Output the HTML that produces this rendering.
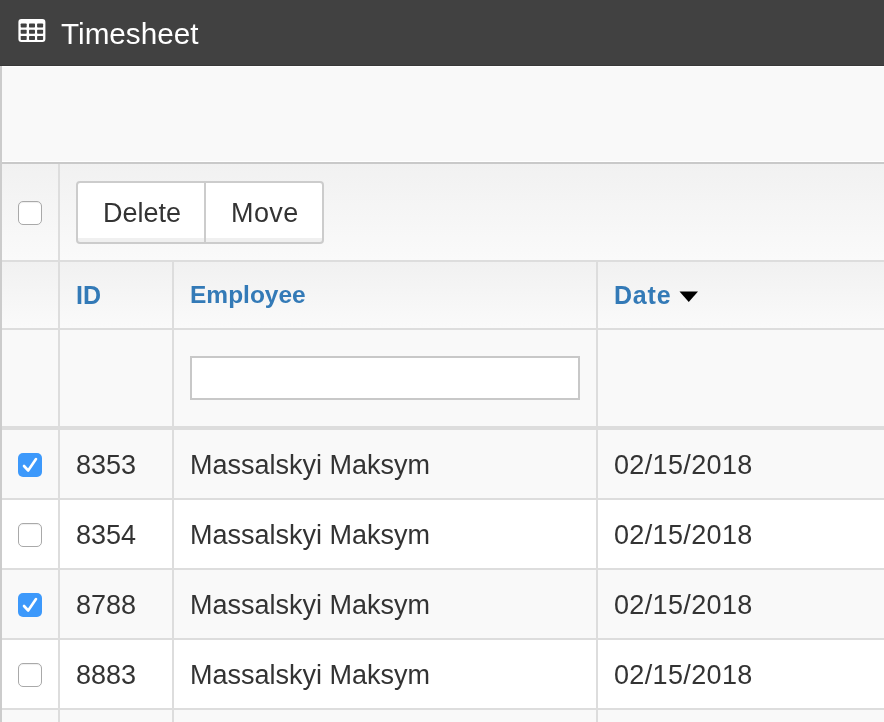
<!DOCTYPE html>
<html><head><meta charset="utf-8">
<style>
html,body{margin:0;padding:0;}
body{width:884px;height:722px;overflow:hidden;position:relative;background:#fff;font-family:"Liberation Sans",sans-serif;color:#333;}
div,span{position:absolute;box-sizing:border-box;}
.hdr{left:0;top:0;width:884px;height:66px;background:#414141;border-bottom:1px solid #383838;}
.title{left:61px;top:15.5px;font-size:29.7px;line-height:36px;color:#fff;white-space:nowrap;}
.lb{left:0;top:66px;width:2px;height:656px;background:#cccccc;}
.panel{left:2px;top:66px;width:882px;height:96px;background:#f9f9f9;border-top:1px solid #fff;border-bottom:1px solid #fff;}
.hline{left:2px;width:882px;}
.vline{width:2px;background:#dddddd;}
.grad{background:linear-gradient(to bottom,#f1f1f1,#fafafa);}
.txt,.th,.title{will-change:transform;}
.txt{font-size:27px;line-height:32px;white-space:nowrap;color:#333;}
.th{font-size:25px;line-height:32px;font-weight:bold;color:#337ab7;white-space:nowrap;}
.cb{width:24px;height:24px;border:1px solid #a9a9a9;border-radius:5px;background:#fff;box-shadow:inset 0 1px 1px rgba(0,0,0,0.07);}
.cbc{width:24px;height:24px;border-radius:5px;background:#3d99fb;}
.btn{top:181px;height:63px;border:2px solid #cccccc;background:linear-gradient(to bottom,#fff 0,#fff 55px,#f0f0f0 55px,#f0f0f0 100%);}
</style></head><body>
<div class="hdr"></div>
<svg style="position:absolute;left:18px;top:19px" width="28" height="24" viewBox="0 0 28 24"><rect x="0.4" y="0.1" width="27" height="22.9" rx="3" fill="#fff"/><rect x="2.7" y="4.5" width="6" height="4" rx="0.7" fill="#414141"/><rect x="2.7" y="10.7" width="6" height="4" rx="0.7" fill="#414141"/><rect x="2.7" y="16.9" width="6" height="4" rx="0.7" fill="#414141"/><rect x="11" y="4.5" width="6" height="4" rx="0.7" fill="#414141"/><rect x="11" y="10.7" width="6" height="4" rx="0.7" fill="#414141"/><rect x="11" y="16.9" width="6" height="4" rx="0.7" fill="#414141"/><rect x="19.1" y="4.5" width="6" height="4" rx="0.7" fill="#414141"/><rect x="19.1" y="10.7" width="6" height="4" rx="0.7" fill="#414141"/><rect x="19.1" y="16.9" width="6" height="4" rx="0.7" fill="#414141"/></svg>
<div class="title">Timesheet</div>

<div class="lb"></div>
<div class="panel"></div>

<!-- toolbar row -->
<div class="hline" style="top:162px;height:2px;background:#c9c9c9;"></div>
<div class="hline grad" style="top:164px;height:96px;"></div>
<div class="hline" style="top:260px;height:2px;background:#dddddd;"></div>
<!-- header row -->
<div class="hline grad" style="top:262px;height:66px;"></div>
<div class="hline" style="top:328px;height:2px;background:#dddddd;"></div>
<!-- filter row -->
<div class="hline" style="top:330px;height:96px;background:#f9f9f9;"></div>
<div class="hline" style="top:426px;height:4px;background:#dddddd;"></div>
<!-- data rows -->
<div class="hline" style="top:430px;height:68px;background:#f9f9f9;"></div>
<div class="hline" style="top:498px;height:2px;background:#dddddd;"></div>
<div class="hline" style="top:500px;height:68px;background:#fff;"></div>
<div class="hline" style="top:568px;height:2px;background:#dddddd;"></div>
<div class="hline" style="top:570px;height:68px;background:#f9f9f9;"></div>
<div class="hline" style="top:638px;height:2px;background:#dddddd;"></div>
<div class="hline" style="top:640px;height:68px;background:#fff;"></div>
<div class="hline" style="top:708px;height:2px;background:#dddddd;"></div>
<div class="hline" style="top:710px;height:12px;background:#f9f9f9;"></div>

<!-- vertical lines -->
<div class="vline" style="left:58px;top:164px;height:558px;"></div>
<div class="vline" style="left:172px;top:262px;height:460px;"></div>
<div class="vline" style="left:596px;top:262px;height:460px;"></div>

<!-- toolbar -->
<div class="cb" style="left:18px;top:201px;"></div>
<div class="btn" style="left:76px;width:131px;border-radius:4px 0 0 4px;"></div>
<div class="btn" style="left:205px;width:119px;border-left:none;border-radius:0 4px 4px 0;"></div>
<div class="vline" style="left:204px;top:183px;height:59px;background:#cccccc;"></div>
<div class="txt" style="left:102.7px;top:197px;font-size:27px;">Delete</div>
<div class="txt" style="left:231px;top:197px;font-size:27px;letter-spacing:0.4px;">Move</div>

<!-- header -->
<div class="th" style="left:76px;top:279px;">ID</div>
<div class="th" style="left:190px;top:279px;font-size:24.5px;">Employee</div>
<div class="th" style="left:614px;top:279px;letter-spacing:0.8px;">Date</div>
<svg style="position:absolute;left:679px;top:291px" width="20" height="12" viewBox="0 0 20 12"><path d="M0.5 0.5H19L9.75 11Z" fill="#000"/></svg>

<!-- filter -->
<div style="left:190px;top:356px;width:390px;height:44px;border:2px solid #c8c8c8;background:#fff;"></div>

<!-- rows -->
<div class="cbc" style="left:18px;top:453px;"><svg style="position:absolute;left:0;top:0" width="24" height="24" viewBox="0 0 24 24"><path d="M6 13L10.2 17.5L18 6" stroke="#fff" stroke-width="2.6" fill="none" stroke-linecap="round" stroke-linejoin="round"/></svg></div>
<div class="txt" style="left:76px;top:449px;">8353</div>
<div class="txt" style="left:190px;top:449px;">Massalskyi Maksym</div>
<div class="txt" style="left:614px;top:449px;letter-spacing:0.35px;">02/15/2018</div>

<div class="cb" style="left:18px;top:523px;"></div>
<div class="txt" style="left:76px;top:519px;">8354</div>
<div class="txt" style="left:190px;top:519px;">Massalskyi Maksym</div>
<div class="txt" style="left:614px;top:519px;letter-spacing:0.35px;">02/15/2018</div>

<div class="cbc" style="left:18px;top:593px;"><svg style="position:absolute;left:0;top:0" width="24" height="24" viewBox="0 0 24 24"><path d="M6 13L10.2 17.5L18 6" stroke="#fff" stroke-width="2.6" fill="none" stroke-linecap="round" stroke-linejoin="round"/></svg></div>
<div class="txt" style="left:76px;top:589px;">8788</div>
<div class="txt" style="left:190px;top:589px;">Massalskyi Maksym</div>
<div class="txt" style="left:614px;top:589px;letter-spacing:0.35px;">02/15/2018</div>

<div class="cb" style="left:18px;top:663px;"></div>
<div class="txt" style="left:76px;top:659px;">8883</div>
<div class="txt" style="left:190px;top:659px;">Massalskyi Maksym</div>
<div class="txt" style="left:614px;top:659px;letter-spacing:0.35px;">02/15/2018</div>
</body></html>
